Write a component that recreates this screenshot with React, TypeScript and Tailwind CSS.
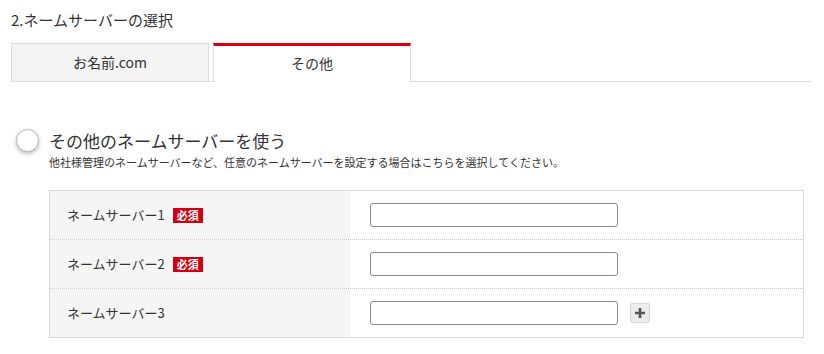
import React from 'react'

const font = { fontFamily: '"Noto Sans CJK JP", "Noto Sans", sans-serif' }

type Row = { label: string; required: boolean; addable?: boolean }

const rows: Row[] = [
  { label: 'ネームサーバー1', required: true },
  { label: 'ネームサーバー2', required: true },
  { label: 'ネームサーバー3', required: false, addable: true },
]

const App = () => {
  return (
    <div className="h-[354px] w-[824px] bg-white text-[#333]" style={font}>
      <div className="pl-[11px] pt-[9px]">
        <h2 className="text-[15px] leading-[22px] font-normal">2.ネームサーバーの選択</h2>

        {/* tabs */}
        <div className="mt-[12px] flex w-[800px] items-stretch">
          <div className="flex h-[39px] w-[198px] items-center justify-center border border-[#dcdcdc] bg-[#f4f4f4] text-[14px]">
            お名前.com
          </div>
          <div className="w-[4px] border-b border-[#dcdcdc]" />
          <div className="flex h-[39px] w-[198px] items-center justify-center border-x border-t-[3px] border-x-[#dcdcdc] border-t-[#d7000f] bg-white pb-[1px] text-[14px]">
            その他
          </div>
          <div className="flex-1 border-b border-[#dcdcdc]" />
        </div>
      </div>

      {/* option */}
      <div className="mt-[47px] flex items-start pl-[16px]">
        <div className="h-[23px] w-[23px] rounded-full border border-[#b5b5b5] bg-white shadow-[0_2px_4px_rgba(0,0,0,0.25)]" />
        <div className="ml-[10px]">
          <p className="text-[17px] leading-[24px]">その他のネームサーバーを使う</p>
          <p className="mt-[1px] text-[11px] leading-[16px]">
            他社様管理のネームサーバーなど、任意のネームサーバーを設定する場合はこちらを選択してください。
          </p>
        </div>
      </div>

      {/* table */}
      <div className="ml-[49px] mt-[20px] w-[755px] border border-[#d9d9d9]">
        {rows.map((row, i) => (
          <div
            key={row.label}
            className={`flex ${i > 0 ? 'h-[49px] border-t border-dotted border-[#c8c8c8]' : 'h-[48px]'}`}
          >
            <div className="flex w-[300px] items-center bg-[#f5f5f5] pl-[17px] text-[13px]">
              <span>{row.label}</span>
              {row.required && (
                <span className="ml-[8px] flex h-[15px] w-[30px] items-center justify-center bg-[#d0000f] text-[11px] leading-none font-bold text-white">
                  必須
                </span>
              )}
            </div>
            <div className="flex flex-1 items-center pl-[20px]">
              <input
                type="text"
                className="h-[24px] w-[248px] rounded-[3px] border border-[#8a8a8a] bg-white px-2 text-[13px] outline-none"
              />
              {row.addable && (
                <button
                  type="button"
                  className="ml-[12px] flex h-[20px] w-[20px] items-center justify-center rounded-[2px] border border-[#d6d6d6] bg-[#ececec]"
                >
                  <svg width="12" height="12" viewBox="0 0 12 12">
                    <path d="M6 1v10M1 6h10" stroke="#555" strokeWidth="2.6" />
                  </svg>
                </button>
              )}
            </div>
          </div>
        ))}
      </div>
    </div>
  )
}

export default App
